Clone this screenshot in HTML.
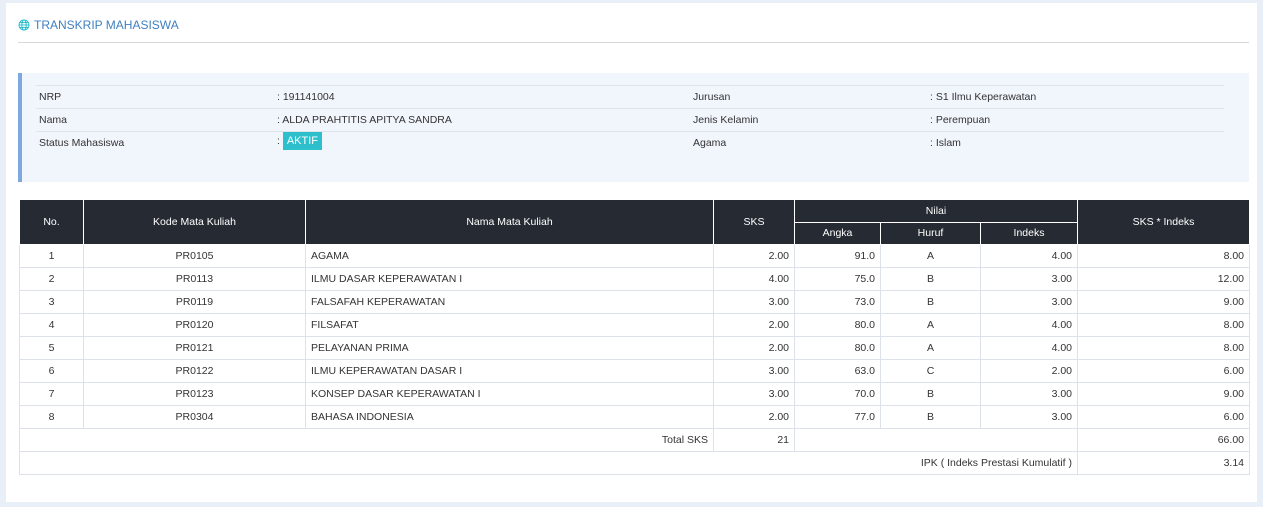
<!DOCTYPE html>
<html><head><meta charset="utf-8"><style>
*{box-sizing:border-box;margin:0;padding:0}
body{width:1263px;height:507px;background:#e8eff7;font-family:"Liberation Sans",sans-serif;font-size:10.5px;color:#333;position:relative;overflow:hidden}
.card{position:absolute;left:6px;top:3px;width:1251px;height:499px;background:#fff}
.title{position:absolute;left:18px;top:18px;color:#3f7fc0;font-size:12px;display:flex;align-items:center;gap:4px}
.hr{position:absolute;left:18px;top:42px;width:1231px;height:1px;background:#d8d8d8}
.info{position:absolute;left:18px;top:73px;width:1231px;height:109px;background:#f1f5fc;border-left:4px solid #7ea9e0}
.info .row{position:absolute;left:14px;width:1188px;height:23px;border-top:1px solid #e0e4ea}
.info span{position:absolute;top:5px}
.badge{background:#2ebfcd;color:#fff;padding:3px 4px;font-size:11px}
table{position:absolute;left:19px;top:199px;width:1230px;border-collapse:collapse;table-layout:fixed}
th{background:#262b33;color:#fff;font-weight:normal;border:1px solid #fff;height:22.5px;text-align:center}
td{border:1px solid #dde2ea;height:23px;padding:0 5px}
.c{text-align:center}.r{text-align:right}
</style></head><body>
<div class="card"></div>
<div class="title"><svg width="12" height="12" viewBox="0 0 12 12" fill="none" stroke="#2ebfcd" stroke-width="1"><circle cx="6" cy="6" r="5"/><ellipse cx="6" cy="6" rx="2.2" ry="5"/><line x1="1" y1="6" x2="11" y2="6"/><line x1="1.8" y1="3.5" x2="10.2" y2="3.5"/><line x1="1.8" y1="8.5" x2="10.2" y2="8.5"/></svg>TRANSKRIP MAHASISWA</div>
<div class="hr"></div>
<div class="info">
<div class="row" style="top:12px"><span style="left:3px">NRP</span><span style="left:241px">: 191141004</span><span style="left:657px">Jurusan</span><span style="left:894px">: S1 Ilmu Keperawatan</span></div>
<div class="row" style="top:35px"><span style="left:3px">Nama</span><span style="left:241px">: ALDA PRAHTITIS APITYA SANDRA</span><span style="left:657px">Jenis Kelamin</span><span style="left:894px">: Perempuan</span></div>
<div class="row" style="top:58px"><span style="left:3px">Status Mahasiswa</span><span style="left:241px;top:3px">: <span class="badge" style="position:static">AKTIF</span></span><span style="left:657px">Agama</span><span style="left:894px">: Islam</span></div>
</div>
<table>
<colgroup><col style="width:64px"><col style="width:222px"><col style="width:408px"><col style="width:81px"><col style="width:86px"><col style="width:100px"><col style="width:97px"><col style="width:172px"></colgroup>
<tr><th rowspan="2">No.</th><th rowspan="2">Kode Mata Kuliah</th><th rowspan="2">Nama Mata Kuliah</th><th rowspan="2">SKS</th><th colspan="3">Nilai</th><th rowspan="2">SKS * Indeks</th></tr>
<tr><th>Angka</th><th>Huruf</th><th>Indeks</th></tr>
<tr><td class="c">1</td><td class="c">PR0105</td><td>AGAMA</td><td class="r">2.00</td><td class="r">91.0</td><td class="c">A</td><td class="r">4.00</td><td class="r">8.00</td></tr>
<tr><td class="c">2</td><td class="c">PR0113</td><td>ILMU DASAR KEPERAWATAN I</td><td class="r">4.00</td><td class="r">75.0</td><td class="c">B</td><td class="r">3.00</td><td class="r">12.00</td></tr>
<tr><td class="c">3</td><td class="c">PR0119</td><td>FALSAFAH KEPERAWATAN</td><td class="r">3.00</td><td class="r">73.0</td><td class="c">B</td><td class="r">3.00</td><td class="r">9.00</td></tr>
<tr><td class="c">4</td><td class="c">PR0120</td><td>FILSAFAT</td><td class="r">2.00</td><td class="r">80.0</td><td class="c">A</td><td class="r">4.00</td><td class="r">8.00</td></tr>
<tr><td class="c">5</td><td class="c">PR0121</td><td>PELAYANAN PRIMA</td><td class="r">2.00</td><td class="r">80.0</td><td class="c">A</td><td class="r">4.00</td><td class="r">8.00</td></tr>
<tr><td class="c">6</td><td class="c">PR0122</td><td>ILMU KEPERAWATAN DASAR I</td><td class="r">3.00</td><td class="r">63.0</td><td class="c">C</td><td class="r">2.00</td><td class="r">6.00</td></tr>
<tr><td class="c">7</td><td class="c">PR0123</td><td>KONSEP DASAR KEPERAWATAN I</td><td class="r">3.00</td><td class="r">70.0</td><td class="c">B</td><td class="r">3.00</td><td class="r">9.00</td></tr>
<tr><td class="c">8</td><td class="c">PR0304</td><td>BAHASA INDONESIA</td><td class="r">2.00</td><td class="r">77.0</td><td class="c">B</td><td class="r">3.00</td><td class="r">6.00</td></tr>
<tr><td colspan="3" class="r">Total SKS</td><td class="r">21</td><td colspan="3"></td><td class="r">66.00</td></tr>
<tr><td colspan="7" class="r">IPK ( Indeks Prestasi Kumulatif )</td><td class="r">3.14</td></tr>
</table>
</body></html>
